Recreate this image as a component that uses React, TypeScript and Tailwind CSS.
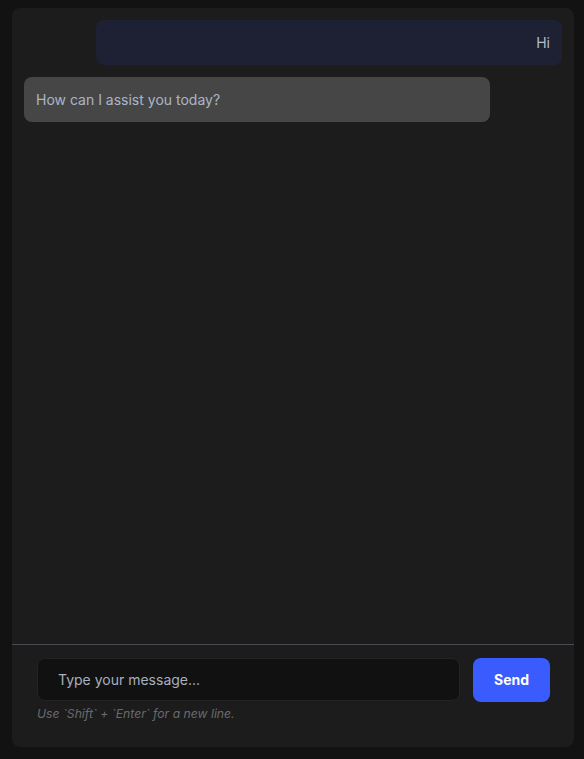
import React from "react";

export default function App() {
  return (
    <div className="w-[584px] h-[759px] bg-[#121212] pl-3 pr-[10px] pt-2 pb-3 flex" style={{ fontFamily: "Inter, 'Noto Sans', sans-serif" }}>
      <div className="flex-1 flex flex-col bg-[#1c1c1c] rounded-lg overflow-hidden">
        <div className="flex-1 flex flex-col gap-3 pl-3 pr-3 pt-3">
          <div className="flex justify-end">
            <div className="w-[466px] h-[45px] bg-[#1e2133] rounded-lg flex items-center justify-end px-3 text-[14px] text-[#b4bccb]">
              Hi
            </div>
          </div>
          <div className="flex justify-start">
            <div className="w-[466px] h-[45px] bg-[#464646] rounded-lg flex items-center px-3 text-[14px] text-[#aab6c6]">
              How can I assist you today?
            </div>
          </div>
        </div>
        <div className="border-t border-[#4a4a52] pt-[13px] pb-[24px] pl-[25px] pr-[24px]">
          <div className="flex items-center gap-[13px]">
            <div className="flex-1 h-[43px] bg-[#111111] border border-[#232323] rounded-lg flex items-center pl-[20px] text-[14px] text-[#a8b0bf]">
              Type your message...
            </div>
            <button className="w-[77px] h-[44px] bg-[#3a5cff] rounded-lg text-white font-bold text-[14px]">
              Send
            </button>
          </div>
          <div className="mt-[3px] text-[12.2px] italic text-[#6a6a6e]">
            Use `Shift` + `Enter` for a new line.
          </div>
        </div>
      </div>
    </div>
  );
}
